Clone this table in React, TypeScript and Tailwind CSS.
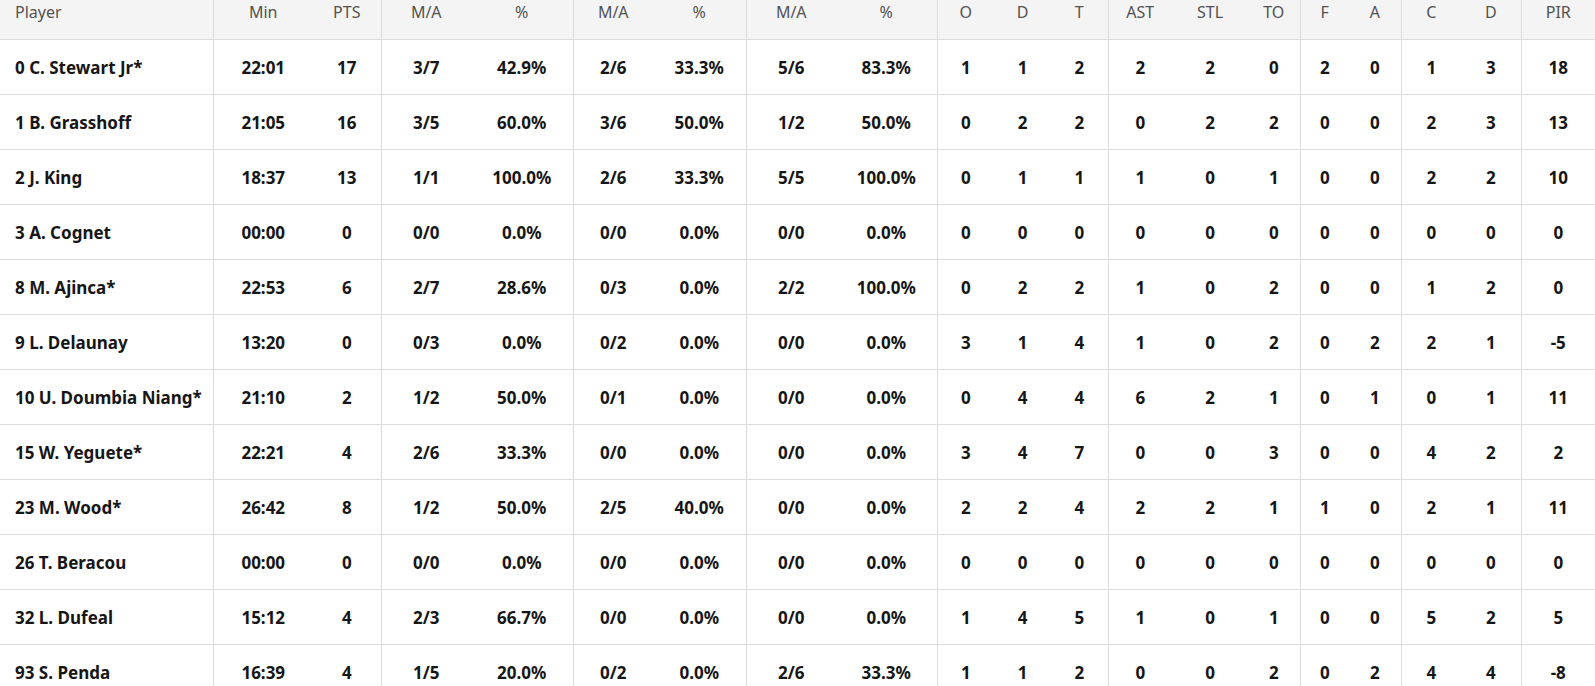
import React from "react";

type Row = {
  player: string;
  min: string;
  pts: number;
  fg2: string;
  fg2p: string;
  fg3: string;
  fg3p: string;
  ft: string;
  ftp: string;
  o: number;
  d: number;
  t: number;
  ast: number;
  stl: number;
  to: number;
  f: number;
  a: number;
  c: number;
  dr: number;
  pir: number;
};

const rows: Row[] = [
  { player: "0 C. Stewart Jr*", min: "22:01", pts: 17, fg2: "3/7", fg2p: "42.9%", fg3: "2/6", fg3p: "33.3%", ft: "5/6", ftp: "83.3%", o: 1, d: 1, t: 2, ast: 2, stl: 2, to: 0, f: 2, a: 0, c: 1, dr: 3, pir: 18 },
  { player: "1 B. Grasshoff", min: "21:05", pts: 16, fg2: "3/5", fg2p: "60.0%", fg3: "3/6", fg3p: "50.0%", ft: "1/2", ftp: "50.0%", o: 0, d: 2, t: 2, ast: 0, stl: 2, to: 2, f: 0, a: 0, c: 2, dr: 3, pir: 13 },
  { player: "2 J. King", min: "18:37", pts: 13, fg2: "1/1", fg2p: "100.0%", fg3: "2/6", fg3p: "33.3%", ft: "5/5", ftp: "100.0%", o: 0, d: 1, t: 1, ast: 1, stl: 0, to: 1, f: 0, a: 0, c: 2, dr: 2, pir: 10 },
  { player: "3 A. Cognet", min: "00:00", pts: 0, fg2: "0/0", fg2p: "0.0%", fg3: "0/0", fg3p: "0.0%", ft: "0/0", ftp: "0.0%", o: 0, d: 0, t: 0, ast: 0, stl: 0, to: 0, f: 0, a: 0, c: 0, dr: 0, pir: 0 },
  { player: "8 M. Ajinca*", min: "22:53", pts: 6, fg2: "2/7", fg2p: "28.6%", fg3: "0/3", fg3p: "0.0%", ft: "2/2", ftp: "100.0%", o: 0, d: 2, t: 2, ast: 1, stl: 0, to: 2, f: 0, a: 0, c: 1, dr: 2, pir: 0 },
  { player: "9 L. Delaunay", min: "13:20", pts: 0, fg2: "0/3", fg2p: "0.0%", fg3: "0/2", fg3p: "0.0%", ft: "0/0", ftp: "0.0%", o: 3, d: 1, t: 4, ast: 1, stl: 0, to: 2, f: 0, a: 2, c: 2, dr: 1, pir: -5 },
  { player: "10 U. Doumbia Niang*", min: "21:10", pts: 2, fg2: "1/2", fg2p: "50.0%", fg3: "0/1", fg3p: "0.0%", ft: "0/0", ftp: "0.0%", o: 0, d: 4, t: 4, ast: 6, stl: 2, to: 1, f: 0, a: 1, c: 0, dr: 1, pir: 11 },
  { player: "15 W. Yeguete*", min: "22:21", pts: 4, fg2: "2/6", fg2p: "33.3%", fg3: "0/0", fg3p: "0.0%", ft: "0/0", ftp: "0.0%", o: 3, d: 4, t: 7, ast: 0, stl: 0, to: 3, f: 0, a: 0, c: 4, dr: 2, pir: 2 },
  { player: "23 M. Wood*", min: "26:42", pts: 8, fg2: "1/2", fg2p: "50.0%", fg3: "2/5", fg3p: "40.0%", ft: "0/0", ftp: "0.0%", o: 2, d: 2, t: 4, ast: 2, stl: 2, to: 1, f: 1, a: 0, c: 2, dr: 1, pir: 11 },
  { player: "26 T. Beracou", min: "00:00", pts: 0, fg2: "0/0", fg2p: "0.0%", fg3: "0/0", fg3p: "0.0%", ft: "0/0", ftp: "0.0%", o: 0, d: 0, t: 0, ast: 0, stl: 0, to: 0, f: 0, a: 0, c: 0, dr: 0, pir: 0 },
  { player: "32 L. Dufeal", min: "15:12", pts: 4, fg2: "2/3", fg2p: "66.7%", fg3: "0/0", fg3p: "0.0%", ft: "0/0", ftp: "0.0%", o: 1, d: 4, t: 5, ast: 1, stl: 0, to: 1, f: 0, a: 0, c: 5, dr: 2, pir: 5 },
  { player: "93 S. Penda", min: "16:39", pts: 4, fg2: "1/5", fg2p: "20.0%", fg3: "0/2", fg3p: "0.0%", ft: "2/6", ftp: "33.3%", o: 1, d: 1, t: 2, ast: 0, stl: 0, to: 2, f: 0, a: 2, c: 4, dr: 4, pir: -8 },
];

// widths in px, and whether a group divider follows the column
const cols: { label: string; w: number; sep?: boolean }[] = [
  { label: "Player", w: 213, sep: true },
  { label: "Min", w: 100 },
  { label: "PTS", w: 68, sep: true },
  { label: "M/A", w: 90 },
  { label: "%", w: 102, sep: true },
  { label: "M/A", w: 80 },
  { label: "%", w: 93, sep: true },
  { label: "M/A", w: 90 },
  { label: "%", w: 101, sep: true },
  { label: "O", w: 57 },
  { label: "D", w: 57 },
  { label: "T", w: 57, sep: true },
  { label: "AST", w: 64 },
  { label: "STL", w: 76 },
  { label: "TO", w: 52, sep: true },
  { label: "F", w: 49 },
  { label: "A", w: 52, sep: true },
  { label: "C", w: 60 },
  { label: "D", w: 60, sep: true },
  { label: "PIR", w: 74 },
];

function cells(r: Row): (string | number)[] {
  return [r.player, r.min, r.pts, r.fg2, r.fg2p, r.fg3, r.fg3p, r.ft, r.ftp, r.o, r.d, r.t, r.ast, r.stl, r.to, r.f, r.a, r.c, r.dr, r.pir];
}

export default function App() {
  return (
    <div
      className="w-[1595px] h-[686px] overflow-hidden bg-white"
      style={{ fontFamily: '"Noto Sans", "Liberation Sans", sans-serif' }}
    >
      <table className="table-fixed border-collapse w-[1595px]">
        <colgroup>
          {cols.map((c, i) => (
            <col key={i} style={{ width: c.w }} />
          ))}
        </colgroup>
        <thead>
          <tr className="bg-[#f4f4f4] h-[39px]">
            {cols.map((c, i) => (
              <th
                key={i}
                className={`align-top p-0 h-[39px] border-b border-[#dcdcdc] font-normal text-[16px] leading-6 text-[#525252] ${
                  i === 0 ? "text-left pl-[15px]" : "text-center"
                } ${c.sep ? "border-r" : ""}`}
              >
                {c.label}
              </th>
            ))}
          </tr>
        </thead>
        <tbody>
          {rows.map((r, ri) => (
            <tr key={ri} className="h-[55px]">
              {cells(r).map((v, i) => (
                <td
                  key={i}
                  className={`p-0 pt-[2px] h-[55px] border-b border-[#dcdcdc] font-bold text-[17px] leading-6 text-[#161616] whitespace-nowrap ${
                    i === 0 ? "text-left pl-[15px]" : "text-center"
                  } ${cols[i].sep ? "border-r" : ""}`}
                >
                  {v}
                </td>
              ))}
            </tr>
          ))}
        </tbody>
      </table>
    </div>
  );
}
